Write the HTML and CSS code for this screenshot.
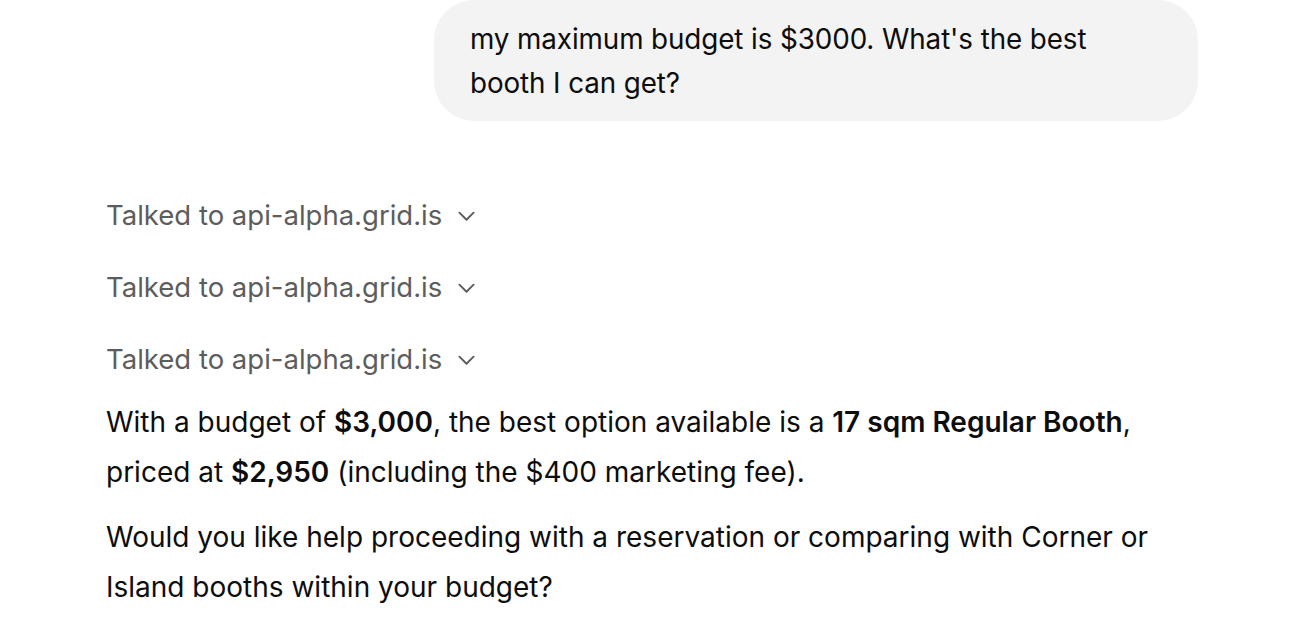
FILE: index.html
```html
<!DOCTYPE html>
<html>
<head>
<meta charset="utf-8">
<link rel="stylesheet" href="styles.css">
</head>
<body>
<div class="thread">
  <div class="user-row">
    <div class="bubble">my maximum budget is $3000. What's the best booth I can get?</div>
  </div>
  <div class="assistant">
    <div class="tools">
      <div class="tool"><span>Talked to api-alpha.grid.is</span><svg class="chev" viewBox="0 0 18 10"><path d="M1.5 1.5l7.5 7.5l7.5-7.5" fill="none" stroke="currentColor" stroke-width="2" stroke-linecap="round" stroke-linejoin="round"/></svg></div>
      <div class="tool"><span>Talked to api-alpha.grid.is</span><svg class="chev" viewBox="0 0 18 10"><path d="M1.5 1.5l7.5 7.5l7.5-7.5" fill="none" stroke="currentColor" stroke-width="2" stroke-linecap="round" stroke-linejoin="round"/></svg></div>
      <div class="tool"><span>Talked to api-alpha.grid.is</span><svg class="chev" viewBox="0 0 18 10"><path d="M1.5 1.5l7.5 7.5l7.5-7.5" fill="none" stroke="currentColor" stroke-width="2" stroke-linecap="round" stroke-linejoin="round"/></svg></div>
    </div>
    <p class="msg">With a budget of <strong>$3,000</strong>, the best option available is a <strong>17 sqm Regular Booth</strong>, priced at <strong>$2,950</strong> (including the $400 marketing fee).</p>
    <p class="msg">Would you like help proceeding with a reservation or comparing with Corner or Island booths within your budget?</p>
  </div>
</div>
</body>
</html>
```

FILE: styles.css
```css
html, body {
  margin: 0;
  padding: 0;
  background: #ffffff;
}
body {
  font-family: Inter, "Noto Sans", sans-serif;
  color: #0d0d0d;
  -webkit-font-smoothing: antialiased;
}
.thread {
  padding: 0 94px 0 106px;
}
.user-row {
  display: flex;
  justify-content: flex-end;
}
.bubble {
  box-sizing: border-box;
  width: 764px;
  background: #f3f3f3;
  border-radius: 40px;
  padding: 17px 60px 16px 36px;
  font-size: 27.8px;
  line-height: 44px;
  letter-spacing: -0.1px;
}
.assistant {
  padding-top: 72px;
}
.tools {
  display: flex;
  flex-direction: column;
  gap: 28px;
}
.tool {
  display: flex;
  align-items: center;
  gap: 16px;
  color: #5d5d5d;
  font-size: 27.5px;
  line-height: 44px;
}
.chev {
  width: 17px;
  height: 10px;
  color: #5d5d5d;
  margin-top: 2px;
}
.msg {
  margin: 16px 0 0 0;
  font-size: 28px;
  line-height: 50px;
  max-width: 1062px;
}
.msg + .msg {
  margin-top: 15px;
}
strong {
  font-weight: 600;
}
```
